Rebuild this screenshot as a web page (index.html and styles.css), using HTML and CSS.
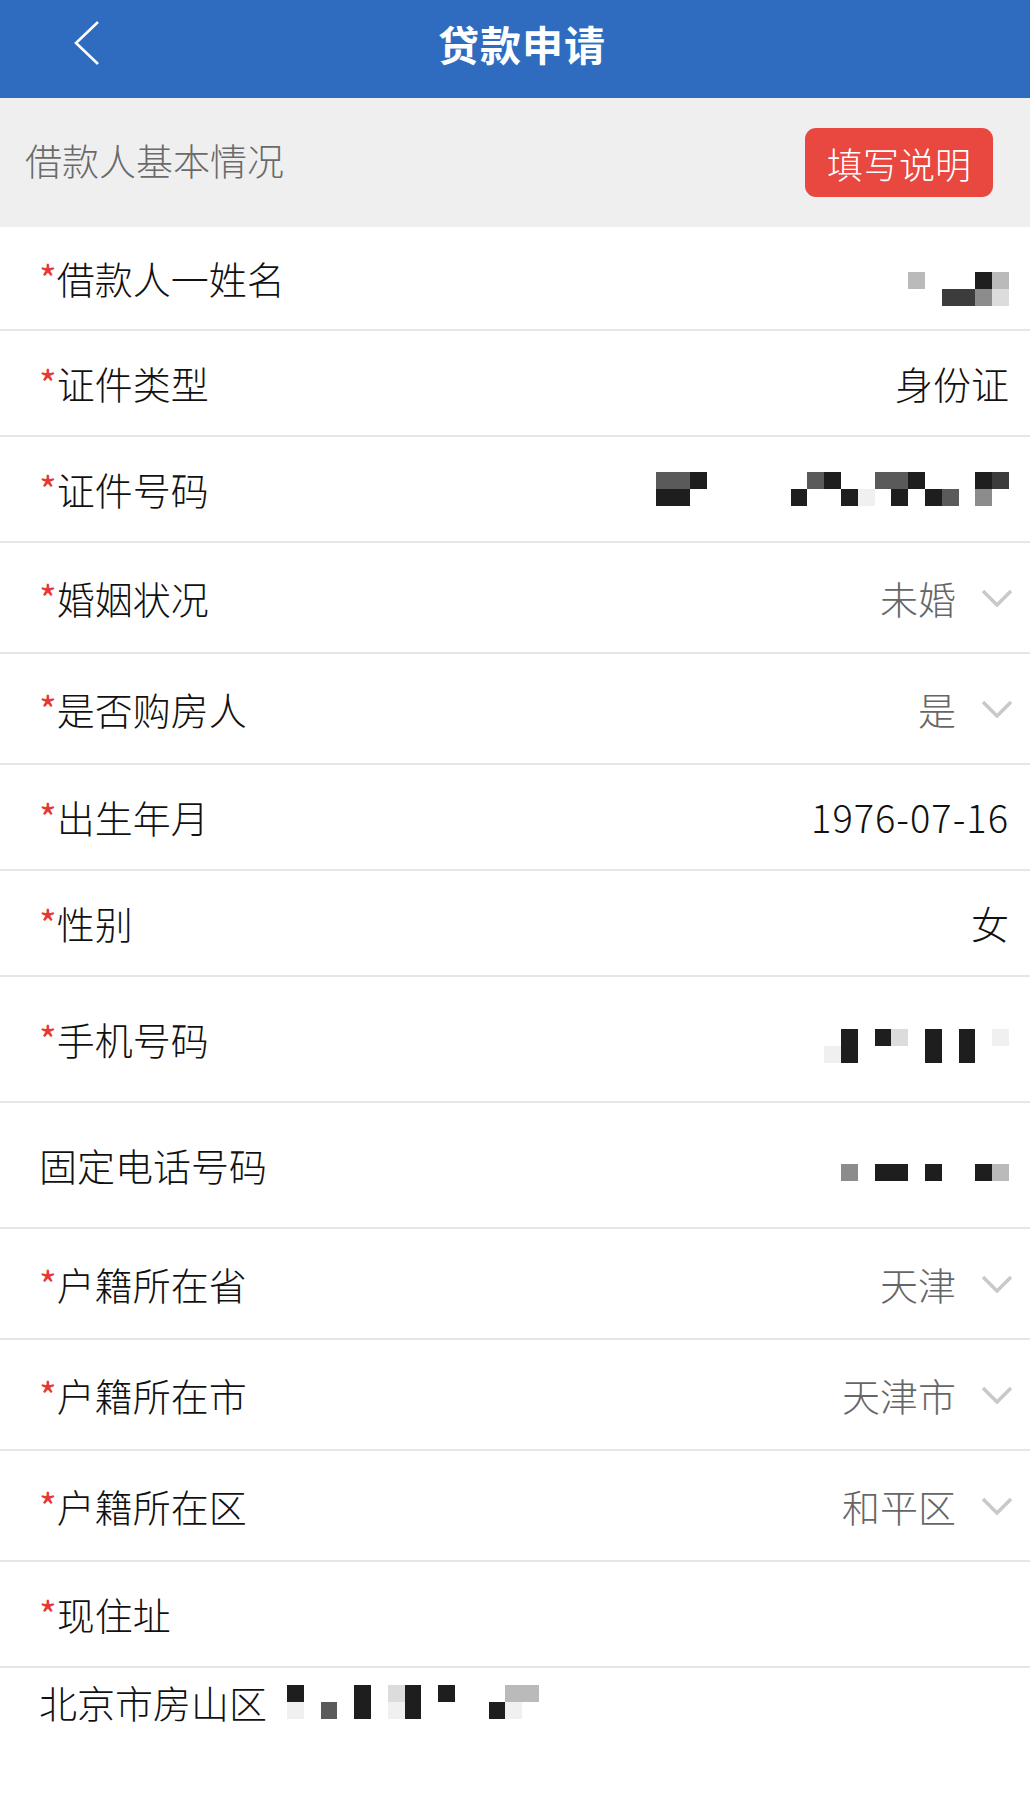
FILE: index.html
```html
<!DOCTYPE html>
<html lang="zh-CN">
<head>
    <meta charset="UTF-8">
    <title>贷款申请</title>
    <meta name="viewport" content="width=device-width, initial-scale=1.0">
    <link rel="stylesheet" href="styles.css">
</head>
<body>
    <div class="header">
        <div class="header-back">
            <svg width="30" height="48" viewBox="0 0 30 48"><polyline points="26,3 4,24 26,45" fill="none" stroke="#fff" stroke-width="2.6"/></svg>
        </div>
        <div class="header-title">贷款申请</div>
        <div></div>
    </div>

    <div class="section">
        <div class="section-title">借款人基本情况</div>
        <div class="section-btn">填写说明</div>
    </div>

    <div class="form">
        <div class="row">
            <div class="label"><span class="req">*</span>借款人一姓名</div>
            <div class="mosaic low">
                <i class="k5"></i><i></i>
                <i></i><i></i>
                <i></i><i class="k2"></i>
                <i></i><i class="k2"></i>
                <i class="k1"></i><i class="k4"></i>
                <i class="k5"></i><i class="k6"></i>
            </div>
        </div>
        <div class="row">
            <div class="label"><span class="req">*</span>证件类型</div>
            <div class="value">身份证</div>
        </div>
        <div class="row">
            <div class="label"><span class="req">*</span>证件号码</div>
            <div class="mosaic">
                <i class="k3"></i><i class="k1"></i>
                <i class="k3"></i><i class="k1"></i>
                <i class="k1"></i><i></i>
                <i></i><i></i>
                <i></i><i></i>
                <i></i><i></i>
                <i></i><i></i>
                <i></i><i></i>
                <i></i><i class="k1"></i>
                <i class="k3"></i><i></i>
                <i class="k1"></i><i></i>
                <i></i><i class="k1"></i>
                <i></i><i class="k7"></i>
                <i class="k3"></i><i></i>
                <i class="k3"></i><i class="k1"></i>
                <i class="k1"></i><i></i>
                <i></i><i class="k1"></i>
                <i></i><i class="k3"></i>
                <i></i><i></i>
                <i class="k1"></i><i class="k4"></i>
                <i class="k2"></i><i></i>
            </div>
        </div>
        <div class="row select">
            <div class="label"><span class="req">*</span>婚姻状况</div>
            <div class="pick">
                <span class="value grey">未婚</span>
                <svg class="arrow" width="32" height="18" viewBox="0 0 32 18"><polyline points="2,2 16,16 30,2" fill="none" stroke="#c9c9c9" stroke-width="3.5"/></svg>
            </div>
        </div>
        <div class="row select">
            <div class="label"><span class="req">*</span>是否购房人</div>
            <div class="pick">
                <span class="value grey">是</span>
                <svg class="arrow" width="32" height="18" viewBox="0 0 32 18"><polyline points="2,2 16,16 30,2" fill="none" stroke="#c9c9c9" stroke-width="3.5"/></svg>
            </div>
        </div>
        <div class="row">
            <div class="label"><span class="req">*</span>出生年月</div>
            <div class="value num">1976-07-16</div>
        </div>
        <div class="row">
            <div class="label"><span class="req">*</span>性别</div>
            <div class="value">女</div>
        </div>
        <div class="row input">
            <div class="label"><span class="req">*</span>手机号码</div>
            <div class="mosaic mid">
                <i></i><i class="k7"></i>
                <i class="k1"></i><i class="k1"></i>
                <i></i><i></i>
                <i class="k1"></i><i></i>
                <i class="k6"></i><i></i>
                <i></i><i></i>
                <i class="k1"></i><i class="k1"></i>
                <i></i><i></i>
                <i class="k1"></i><i class="k1"></i>
                <i></i><i></i>
                <i class="k7"></i><i></i>
            </div>
        </div>
        <div class="row input">
            <div class="label">固定电话号码</div>
            <div class="mosaic one mid">
                <i class="k4"></i><i></i><i class="k1"></i><i class="k1"></i><i></i>
                <i class="k1"></i><i></i><i></i><i class="k1"></i><i class="k5"></i>
            </div>
        </div>
        <div class="row select">
            <div class="label"><span class="req">*</span>户籍所在省</div>
            <div class="pick">
                <span class="value grey">天津</span>
                <svg class="arrow" width="32" height="18" viewBox="0 0 32 18"><polyline points="2,2 16,16 30,2" fill="none" stroke="#c9c9c9" stroke-width="3.5"/></svg>
            </div>
        </div>
        <div class="row select">
            <div class="label"><span class="req">*</span>户籍所在市</div>
            <div class="pick">
                <span class="value grey">天津市</span>
                <svg class="arrow" width="32" height="18" viewBox="0 0 32 18"><polyline points="2,2 16,16 30,2" fill="none" stroke="#c9c9c9" stroke-width="3.5"/></svg>
            </div>
        </div>
        <div class="row select">
            <div class="label"><span class="req">*</span>户籍所在区</div>
            <div class="pick">
                <span class="value grey">和平区</span>
                <svg class="arrow" width="32" height="18" viewBox="0 0 32 18"><polyline points="2,2 16,16 30,2" fill="none" stroke="#c9c9c9" stroke-width="3.5"/></svg>
            </div>
        </div>
        <div class="row">
            <div class="label"><span class="req">*</span>现住址</div>
        </div>
        <div class="address">
            <span class="value">北京市房山区</span>
            <div class="mosaic addr">
                <i class="k1"></i><i class="k7"></i>
                <i></i><i></i>
                <i></i><i class="k3"></i>
                <i></i><i></i>
                <i class="k1"></i><i class="k1"></i>
                <i></i><i></i>
                <i class="k6"></i><i class="k7"></i>
                <i class="k1"></i><i class="k1"></i>
                <i></i><i></i>
                <i class="k1"></i><i></i>
                <i></i><i></i>
                <i></i><i></i>
                <i></i><i class="k1"></i>
                <i class="k5"></i><i class="k7"></i>
                <i class="k5"></i><i></i>
            </div>
        </div>
    </div>
</body>
</html>
```

FILE: styles.css
```css
body {
    margin: 0;
    width: 1030px;
    background-color: #fff;
    font-family: "Noto Sans CJK SC", "Liberation Sans", sans-serif;
}

.header {
    box-sizing: border-box;
    display: grid;
    grid-template-columns: 1fr auto 1fr;
    align-items: center;
    height: 98px;
    padding-bottom: 12px;
    background-color: #2f6cc0;
}
.header-back {
    display: flex;
    padding-left: 72px;
}
.header-title {
    color: #fff;
    font-size: 41px;
    font-weight: bold;
    line-height: 1;
    letter-spacing: 1px;
    padding-left: 14px;
}

.section {
    display: flex;
    justify-content: space-between;
    align-items: center;
    height: 129px;
    padding: 0 37px 0 25px;
    background-color: #efeff0;
}
.section-title {
    color: #6a6a6a;
    font-size: 37px;
    font-weight: 300;
    line-height: 1;
    padding-bottom: 4px;
}
.section-btn {
    display: flex;
    align-items: center;
    justify-content: center;
    width: 188px;
    height: 69px;
    border-radius: 11px;
    background-color: #e8483f;
    color: #fff;
    font-size: 36px;
    font-weight: 300;
    line-height: 1;
}

.row {
    box-sizing: border-box;
    display: flex;
    justify-content: space-between;
    align-items: center;
    height: 106px;
    padding: 0 21px 0 39px;
    border-bottom: 2px solid #e6e6e6;
}
.row:first-child { height: 104px; }
.row.select { height: 111px; }
.row.input { height: 126px; }

.label, .value {
    font-size: 38px;
    font-weight: 300;
    line-height: 1;
    color: #111;
}
.req {
    color: #e53935;
    font-weight: 400;
}
.value.grey {
    color: #666;
}
.value.num {
    letter-spacing: 1px;
}
.pick {
    display: flex;
    align-items: center;
}
.arrow {
    margin-left: 25px;
    margin-right: -4px;
}

.mosaic {
    display: grid;
    grid-auto-flow: column;
    grid-template-rows: repeat(2, 17px);
    grid-auto-columns: 16.8px;
}
.mosaic.one { grid-template-rows: 17px; }
.mosaic.low { margin-top: 22px; }
.mosaic.mid { margin-top: 14px; }
.mosaic.addr { margin-left: 20px; }
.mosaic i { display: block; }
.k1 { background-color: #1e1e1e; }
.k2 { background-color: #3c3c3c; }
.k3 { background-color: #5a5a5a; }
.k4 { background-color: #8c8c8c; }
.k5 { background-color: #bababa; }
.k6 { background-color: #dcdcdc; }
.k7 { background-color: #f0f0f0; }

.address {
    display: flex;
    align-items: center;
    padding: 15px 39px;
}
```
